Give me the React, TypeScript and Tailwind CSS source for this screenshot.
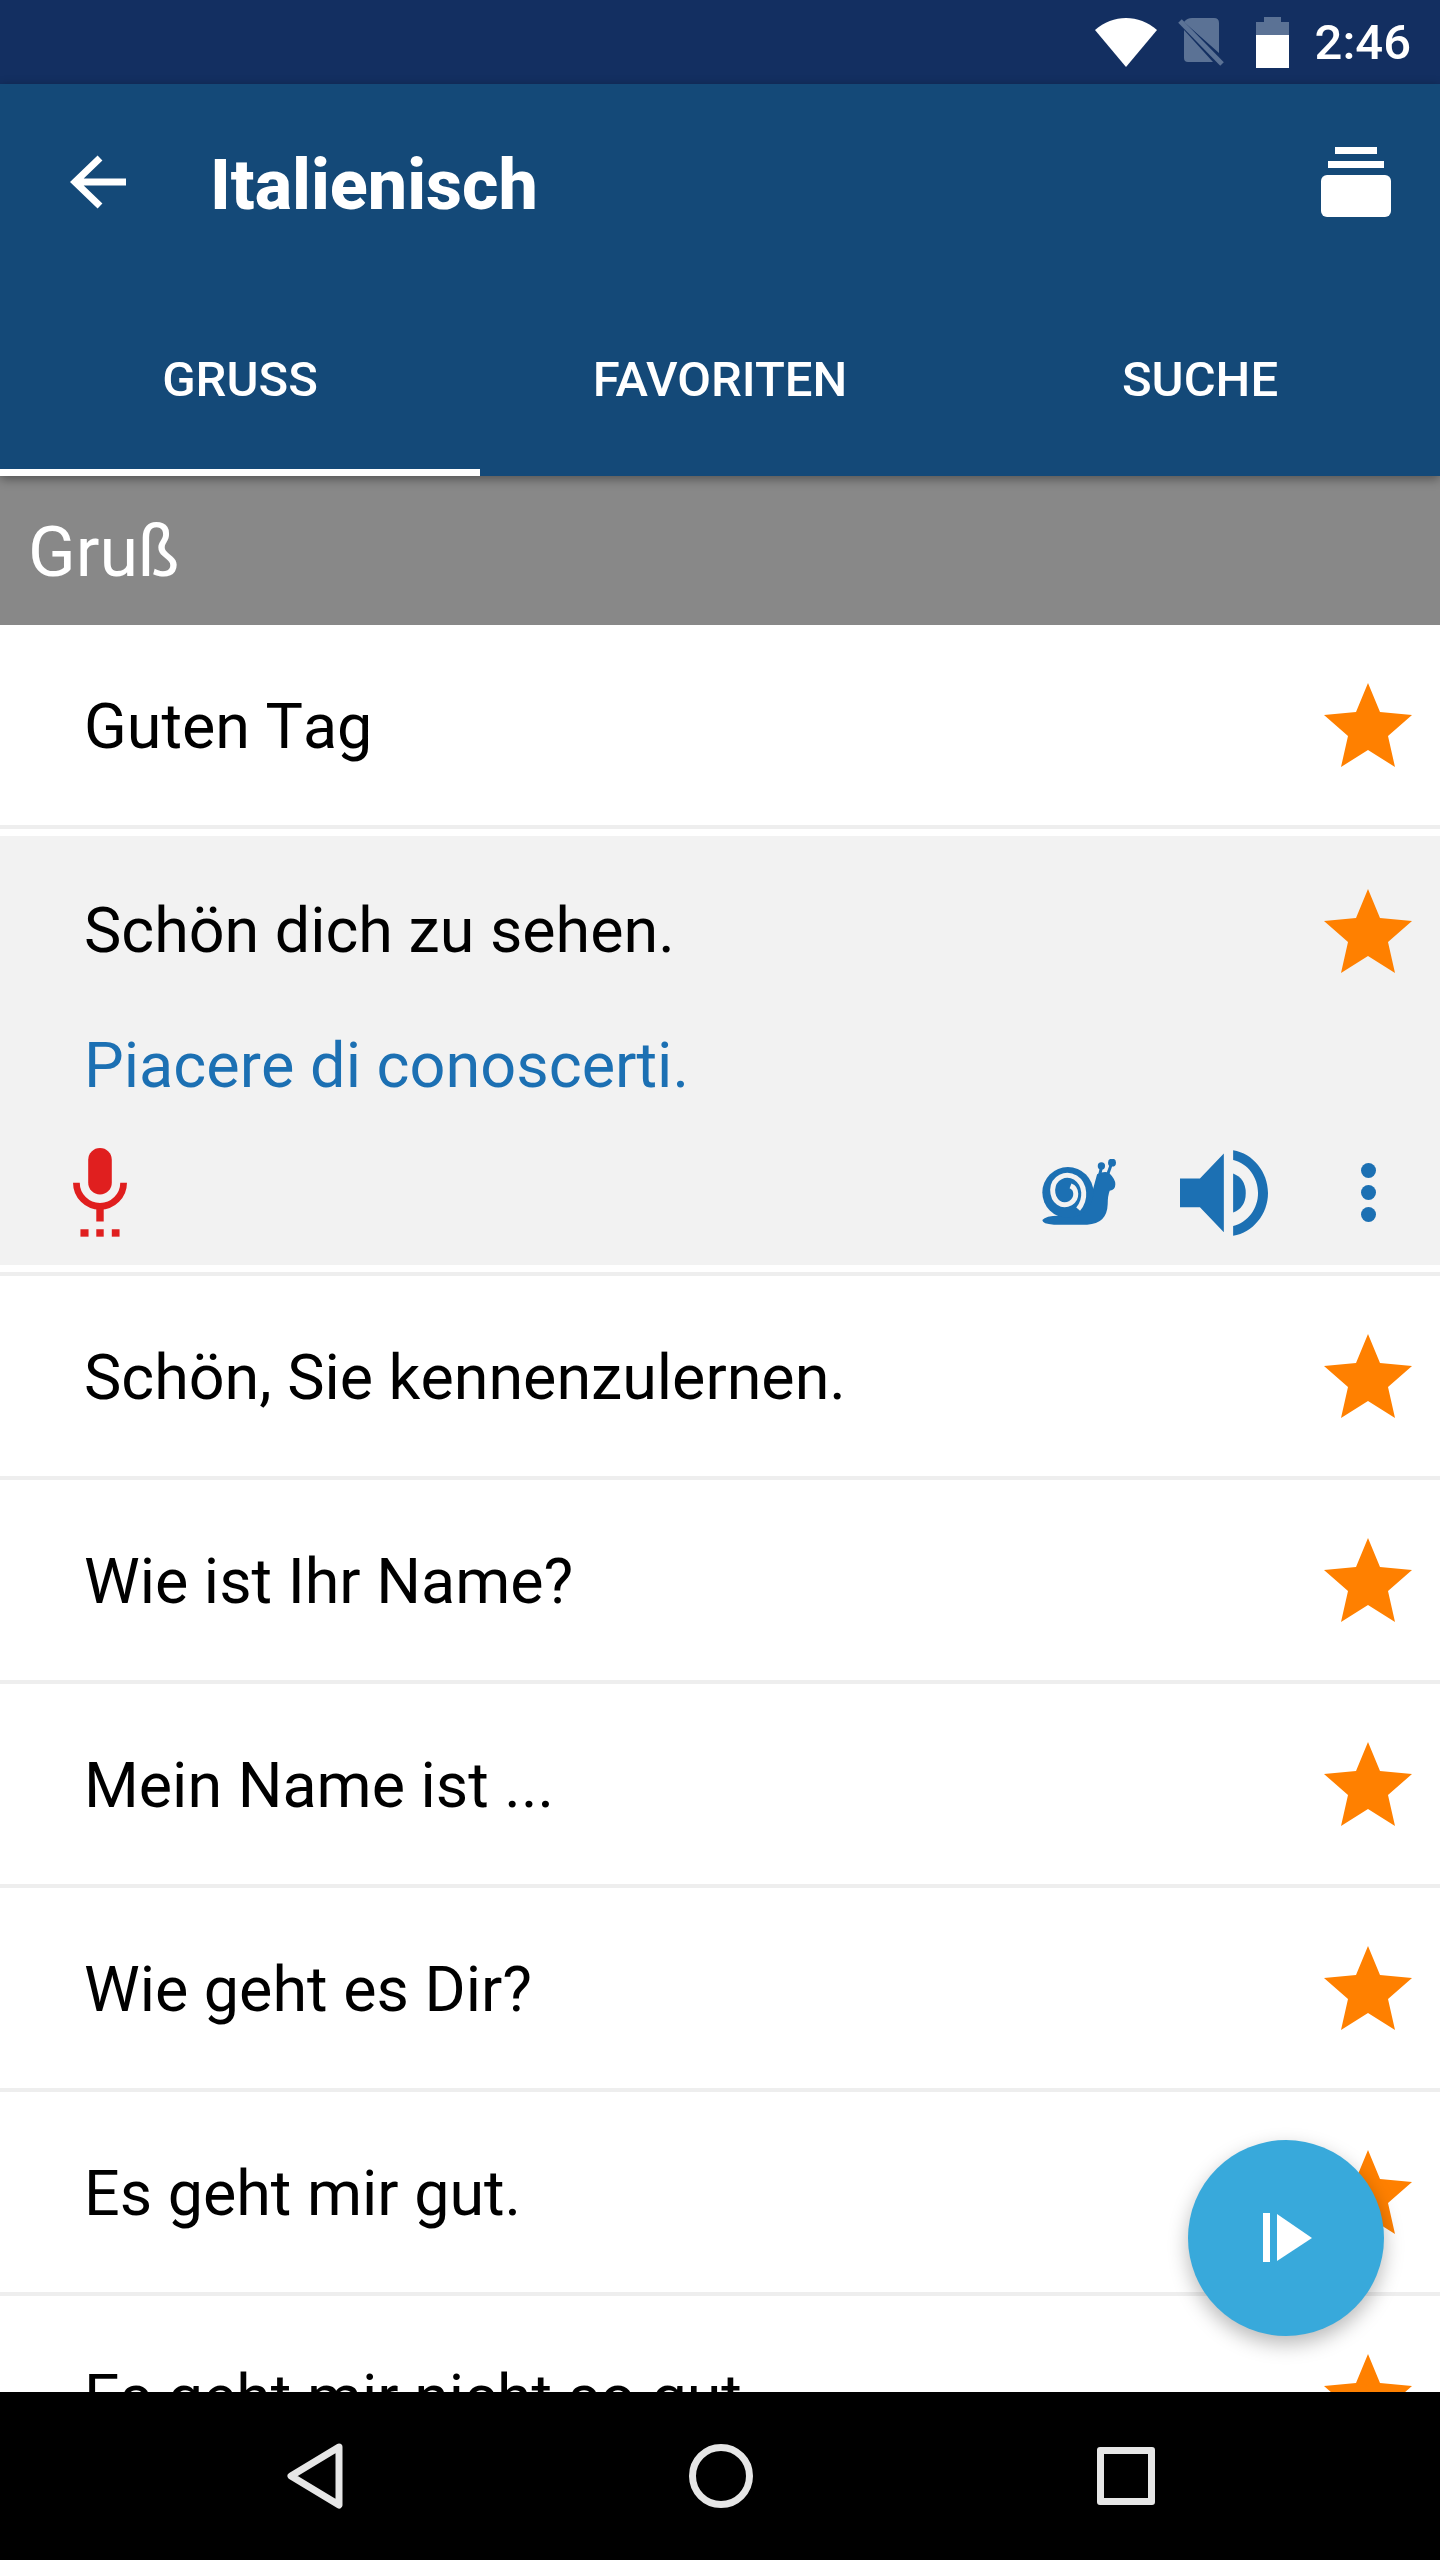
const rowsBelow = [
    'Schön, Sie kennenzulernen.',
    'Wie ist Ihr Name?',
    'Mein Name ist ...',
    'Wie geht es Dir?',
    'Es geht mir gut.',
    'Es geht mir nicht so gut.',
]

const tabs = ['GRUSS', 'FAVORITEN', 'SUCHE']

const Star = () => (
    <svg viewBox="0 0 88 84" className="w-[88px] h-[84px] shrink-0 fill-[#ff8000]">
        <path d="M44 0 L56 29 L88 32 L64 53 L71 84 L44 67 L17 84 L24 53 L0 32 L32 29 Z" />
    </svg>
)

const PhraseHead = ({ text, expanded }: { text: string; expanded?: boolean }) => (
    <div
        className={
            expanded
                ? 'h-[190px] flex items-center justify-between pl-[84px] pr-[28px]'
                : 'h-[200px] flex items-center justify-between pl-[84px] pr-[28px]'
        }
    >
        <span
            className={
                expanded
                    ? 'text-[62.8px] leading-none text-black whitespace-nowrap'
                    : 'text-[62.8px] leading-none text-black whitespace-nowrap pt-[5px]'
            }
        >
            {text}
        </span>
        <Star />
    </div>
)

const StatusIcons = () => (
    <>
        <svg viewBox="0 0 62 49" className="w-[62px] h-[49px]">
            <path d="M0 12 C18 -4 44 -4 62 12 L31 49 Z" fill="#fff" />
        </svg>
        <svg viewBox="0 0 46 48" className="w-[46px] h-[48px] ml-[21px]">
            <path d="M14 0 H36 Q41 0 41 5 V35 L6 4 Q9 0 14 0 Z M6 12 L35 44 H10 Q6 44 6 40 Z" fill="#5b7295" />
            <path d="M2 3 L44 46" stroke="#5b7295" strokeWidth="5" />
        </svg>
        <svg viewBox="0 0 33 51" className="w-[33px] h-[51px] ml-[32px]">
            <path d="M8 0 H25 V5 H33 V18 H0 V5 H8 Z" fill="#5b7295" />
            <rect x="0" y="18" width="33" height="33" fill="#fff" />
        </svg>
    </>
)

const Mic = () => (
    <svg viewBox="220 147 160 264" className="w-[54px] h-[89px]">
        <rect x="265" y="147" width="70" height="138" rx="35" fill="#e01f1f" />
        <path d="M230 250 A70 70 0 0 0 370 250" fill="none" stroke="#e01f1f" strokeWidth="20" />
        <rect x="289" y="325" width="22" height="40" fill="#e01f1f" />
        <rect x="242" y="388" width="24" height="22" fill="#e01f1f" />
        <rect x="289" y="388" width="22" height="22" fill="#e01f1f" />
        <rect x="335" y="388" width="23" height="22" fill="#e01f1f" />
    </svg>
)

const Snail = () => (
    <svg viewBox="24 30 226 200" className="w-[75px] h-[67px]">
        <path
            d="M25 213 Q35 200 75 200 L130 190 L175 130 L190 75 Q210 65 225 70 Q245 90 245 105 Q245 122 228 125 Q222 140 222 165 Q220 225 160 227 L60 227 Q25 225 25 213 Z"
            fill="#1c70b3"
        />
        <circle cx="102" cy="130" r="77" fill="#1c70b3" />
        <path
            d="M133 180 C158 150 155 105 125 85 C95 68 58 85 56 122 C56 158 85 176 110 162 C132 148 130 118 110 110"
            fill="none"
            stroke="#f2f2f2"
            strokeWidth="15"
        />
        <path d="M197 80 L203 55 M222 75 L234 42" stroke="#1c70b3" strokeWidth="9" />
        <circle cx="203" cy="50" r="11" fill="#1c70b3" />
        <circle cx="235" cy="40" r="12" fill="#1c70b3" />
    </svg>
)

const Speaker = () => (
    <svg viewBox="540 150 265 258" className="w-[88px] h-[86px] ml-[63px]">
        <path d="M540 235 H600 L672 160 V397 L600 322 H540 Z" fill="#1c70b3" />
        <path d="M700 220 Q738 235 738 279 Q738 323 700 338 Z" fill="#1c70b3" />
        <path
            d="M700 150 C760 160 805 215 805 279 C805 343 760 398 700 408 V378 C745 368 775 325 775 279 C775 233 745 190 700 180 Z"
            fill="#1c70b3"
        />
    </svg>
)

const Dots = () => (
    <div className="flex flex-col gap-[7px] ml-[93px]">
        <div className="w-[15px] h-[15px] rounded-full bg-[#1c70b3]" />
        <div className="w-[15px] h-[15px] rounded-full bg-[#1c70b3]" />
        <div className="w-[15px] h-[15px] rounded-full bg-[#1c70b3]" />
    </div>
)

export default function App() {
    return (
        <div className="w-[1440px] h-[2560px] flex flex-col bg-white font-[Roboto,sans-serif] [font-kerning:none] overflow-hidden">
            {/* Status bar */}
            <div className="h-[84px] shrink-0 bg-[#132f61] flex items-center justify-end pr-[29px]">
                <StatusIcons />
                <span className="ml-[26px] text-[49px] leading-none font-medium text-white">2:46</span>
            </div>

            {/* App bar and tabs */}
            <div className="relative z-10 shrink-0 bg-[#144978] shadow-[0_3px_10px_rgba(0,0,0,0.4)]">
                <div className="h-[202px] flex items-center pl-[70px] pr-[49px] pb-[6px]">
                    <svg viewBox="0 0 56 54" className="w-[56px] h-[54px]">
                        <path d="M56 27 H5 M30 3 L5 27 L30 51" fill="none" stroke="#fff" strokeWidth="7" />
                    </svg>
                    <span className="ml-[84px] pt-[5px] text-[70px] leading-none font-extrabold text-white">Italienisch</span>
                    <div className="ml-auto flex flex-col items-center">
                        <div className="w-[42px] h-[7px] bg-white" />
                        <div className="w-[56px] h-[7px] bg-white mt-[7px]" />
                        <div className="w-[70px] h-[42px] rounded-[6px] bg-white mt-[7px]" />
                    </div>
                </div>
                <div className="grid grid-cols-3 h-[190px]">
                    {tabs.map((tab, i) => (
                        <div
                            key={tab}
                            className={
                                i === 0
                                    ? 'flex items-center justify-center border-b-[7px] border-white pt-[3px]'
                                    : 'flex items-center justify-center border-b-[7px] border-transparent pt-[3px]'
                            }
                        >
                            <span className="text-[49px] leading-none font-medium text-white [font-kerning:normal]">{tab}</span>
                        </div>
                    ))}
                </div>
            </div>

            {/* Phrase list */}
            <div className="relative flex-1 overflow-hidden">
                <div className="h-[149px] bg-[#888888] flex items-center pl-[28px] pt-[3px]">
                    <span className="text-[70px] leading-none text-white">Gruß</span>
                </div>

                <div className="border-b-4 border-[#eeeeee]">
                    <PhraseHead text="Guten Tag" />
                </div>

                <div className="py-[7px]">
                    <div className="bg-[#f2f2f2]">
                        <PhraseHead text="Schön dich zu sehen." expanded />
                        <div className="h-[70px] flex items-center pl-[84px] pt-[8px]">
                            <span className="text-[63px] leading-none text-[#1c70b3]">Piacere di conoscerti.</span>
                        </div>
                        <div className="flex items-center pl-[73px] pr-[64px] pt-[52px] pb-[28px]">
                            <Mic />
                            <div className="ml-auto flex items-center">
                                <Snail />
                                <Speaker />
                                <Dots />
                            </div>
                        </div>
                    </div>
                </div>

                {rowsBelow.map(text => (
                    <div key={text} className="border-t-4 border-[#eeeeee]">
                        <PhraseHead text={text} />
                    </div>
                ))}

                <button className="absolute right-[56px] bottom-[56px] w-[196px] h-[196px] rounded-full bg-[#38a9db] shadow-[0_8px_20px_rgba(0,0,0,0.28)] flex items-center justify-center">
                    <svg viewBox="0 0 50 50" className="w-[50px] h-[50px] ml-[4px] fill-white">
                        <rect x="0" y="0" width="7" height="49" />
                        <path d="M14 1 L49 25 L14 48 Z" />
                    </svg>
                </button>
            </div>

            {/* Navigation bar */}
            <div className="h-[168px] shrink-0 bg-black flex items-center pl-[286px]">
                <svg viewBox="0 0 58 66" className="w-[58px] h-[66px]">
                    <path d="M53 4 L5 33 L53 62 Z" fill="none" stroke="#e6e6e6" strokeWidth="7" strokeLinejoin="round" />
                </svg>
                <svg viewBox="0 0 64 64" className="w-[64px] h-[64px] ml-[345px]">
                    <circle cx="32" cy="32" r="28.5" fill="none" stroke="#e6e6e6" strokeWidth="7" />
                </svg>
                <div className="w-[58px] h-[58px] ml-[344px] border-[7px] border-[#e6e6e6] rounded-[3px]" />
            </div>
        </div>
    )
}
